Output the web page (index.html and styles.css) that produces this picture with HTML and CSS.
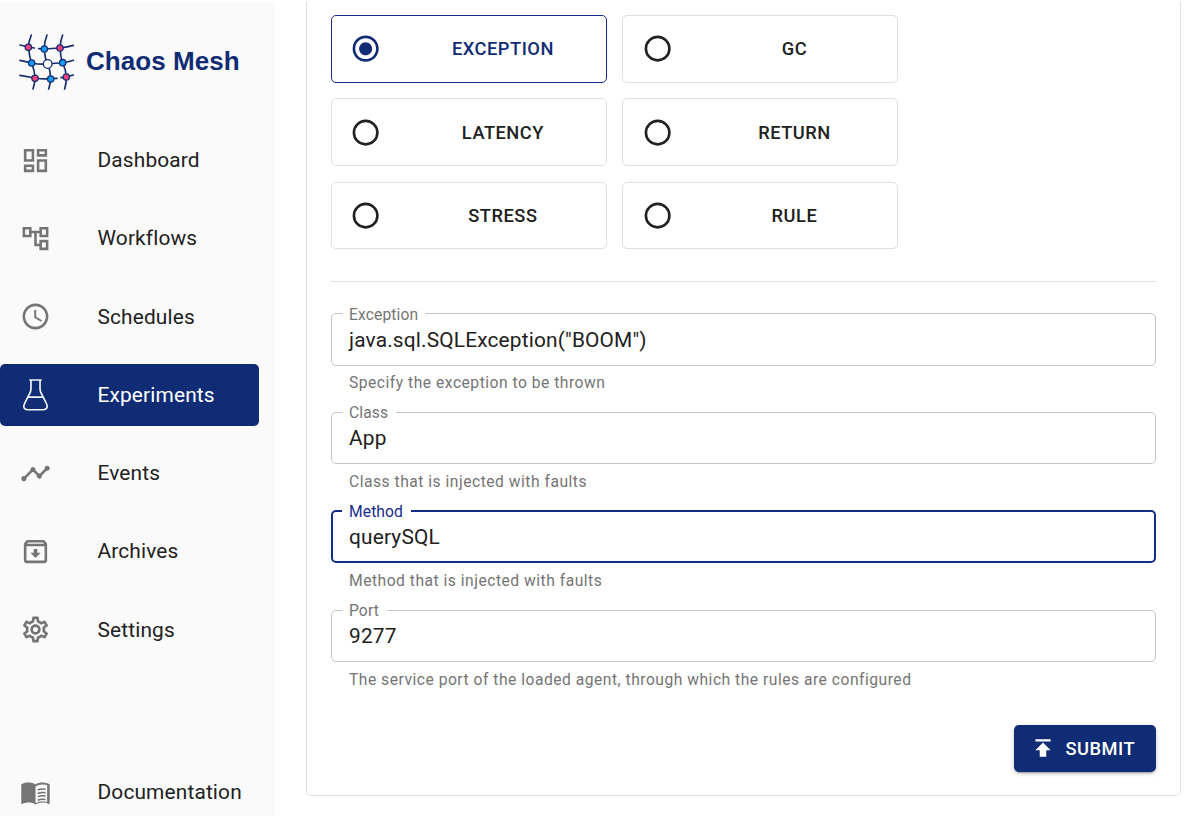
FILE: index.html
```html
<!DOCTYPE html>
<html lang="en">
<head>
<meta charset="utf-8">
<title>Chaos Mesh</title>
<link rel="stylesheet" href="styles.css">
</head>
<body>
<div class="app">
  <aside class="sidebar">
    <div class="brand">
      <svg class="brand-mark" viewBox="0 0 240 225">
        <g fill="none" stroke="#172d72" stroke-width="5" stroke-linecap="round" stroke-linejoin="round">
          <path d="M64 30Q57 46 55 66Q58 94 65 114Q74 136 75 159Q74 177 69 192"/>
          <path d="M111 30Q103 49 103 72Q104 98 113 117Q122 138 122 161Q121 178 116 192"/>
          <path d="M158 30Q151 47 150 69Q151 94 158 114Q168 134 169 156Q169 177 164 192"/>
          <path d="M30 60L55 66L73 69M86 71L103 72L150 69Q173 66 190 61"/>
          <path d="M30 106Q46 110 65 114Q90 119 113 117Q136 114 158 114Q176 111 190 106"/>
          <path d="M30 151Q53 155 75 159Q99 163 122 161L141 160M153 158L169 156L190 150"/>
        </g>
        <g stroke="#172d72" stroke-width="4">
          <g fill="#f8417c"><circle cx="55" cy="67" r="9.500"/><circle cx="150" cy="69" r="9.500"/><circle cx="75" cy="160" r="9.500"/><circle cx="169" cy="156" r="9.500"/></g>
          <g fill="#10a0fa"><circle cx="103" cy="72" r="9.500"/><circle cx="65" cy="114" r="9.500"/><circle cx="158" cy="113" r="9.500"/><circle cx="122" cy="162" r="9.500"/></g>
          <circle cx="113" cy="117" r="13" fill="#fff"/>
        </g>
      </svg>
      <span class="brand-name">Chaos Mesh</span>
    </div>
    <nav class="nav">
      <a class="nav-item"><svg class="icon" viewBox="0 0 24 24"><path d="M19 5v2h-4V5h4M9 5v6H5V5h4m10 8v6h-4v-6h4M9 17v2H5v-2h4M21 3h-8v6h8V3zM11 3H3v10h8V3zm10 8h-8v10h8V11zm-10 4H3v6h8v-6z"/></svg><span>Dashboard</span></a>
      <a class="nav-item"><svg class="icon" viewBox="0 0 24 24"><path d="M22 11V3h-7v3H9V3H2v8h7V8h2v10h4v3h7v-8h-7v3h-2V8h2v3h7zM7 9H4V5h3v4zm10 6h3v4h-3v-4zm0-10h3v4h-3V5z"/></svg><span>Workflows</span></a>
      <a class="nav-item"><svg class="icon" viewBox="0 0 24 24"><path d="M11.99 2C6.47 2 2 6.48 2 12s4.47 10 9.99 10C17.52 22 22 17.52 22 12S17.52 2 11.99 2zM12 20c-4.42 0-8-3.58-8-8s3.58-8 8-8 8 3.58 8 8-3.58 8-8 8zm.5-13H11v6l5.25 3.15.75-1.23-4.5-2.67z"/></svg><span>Schedules</span></a>
      <a class="nav-item nav-item-active"><svg class="icon" viewBox="0 0 24 24"><path class="flask" d="M7.200.8h9.600M8.500.8v6.700c0 1.700-.4 2.800-1.200 4.100L3.700 18.700c-1.700 3.100-.5 5.100 2.300 5.100h12c2.800 0 4-2 2.300-5.100l-3.600-7.100c-.8-1.300-1.200-2.400-1.200-4.100V.8M6.400 14h11.200"/></svg><span>Experiments</span></a>
      <a class="nav-item"><svg class="icon" viewBox="0 0 24 24"><path d="M23 8c0 1.100-.9 2-2 2-.18 0-.35-.02-.51-.07l-3.560 3.550c.05.16.07.34.07.52 0 1.100-.9 2-2 2s-2-.9-2-2c0-.18.02-.36.07-.52l-2.550-2.550c-.16.05-.34.07-.52.07s-.36-.02-.52-.07l-4.550 4.560c.05.16.07.33.07.51 0 1.100-.9 2-2 2s-2-.9-2-2 .9-2 2-2c.18 0 .35.02.51.07l4.560-4.550C8.020 9.360 8 9.180 8 9c0-1.100.9-2 2-2s2 .9 2 2c0 .18-.02.36-.07.52l2.550 2.550c.16-.05.34-.07.52-.07s.36.02.52.07l3.550-3.560C19.020 8.350 19 8.180 19 8c0-1.100.9-2 2-2s2 .9 2 2z"/></svg><span>Events</span></a>
      <a class="nav-item"><svg class="icon" viewBox="0 0 24 24"><path d="M20.540 5.230l-1.390-1.680C18.880 3.210 18.470 3 18 3H6c-.47 0-.88.21-1.160.55L3.460 5.230C3.170 5.570 3 6.020 3 6.500V19c0 1.100.9 2 2 2h14c1.100 0 2-.9 2-2V6.500c0-.48-.17-.93-.46-1.270zM6.240 5h11.520l.83 1H5.420l.82-1zM5 19V8h14v11H5zm8.450-9h-2.900v3H8l4 4 4-4h-2.550z"/></svg><span>Archives</span></a>
      <a class="nav-item"><svg class="icon" viewBox="0 0 24 24"><path d="M19.430 12.980c.04-.32.07-.64.07-.98 0-.34-.03-.66-.07-.98l2.110-1.650c.19-.15.24-.42.12-.64l-2-3.460c-.09-.16-.26-.25-.44-.25-.06 0-.12.01-.17.03l-2.490 1c-.52-.4-1.080-.73-1.690-.98l-.38-2.650C14.460 2.180 14.250 2 14 2h-4c-.25 0-.46.18-.49.42l-.38 2.650c-.61.25-1.170.59-1.690.98l-2.490-1c-.06-.02-.12-.03-.18-.03-.17 0-.34.09-.43.25l-2 3.460c-.13.22-.07.49.12.64l2.110 1.650c-.04.32-.07.65-.07.98 0 .33.03.66.07.98l-2.110 1.650c-.19.15-.24.42-.12.64l2 3.460c.09.16.26.25.44.25.06 0 .12-.01.17-.03l2.490-1c.52.4 1.080.73 1.690.98l.38 2.650c.03.24.24.42.49.42h4c.25 0 .46-.18.49-.42l.38-2.650c.61-.25 1.170-.59 1.690-.98l2.490 1c.06.02.12.03.18.03.17 0 .34-.09.43-.25l2-3.460c.12-.22.07-.49-.12-.64l-2.110-1.650zm-1.980-1.710c.04.31.05.52.05.73 0 .21-.02.43-.05.73l-.14 1.130.89.7 1.080.84-.7 1.210-1.270-.51-1.040-.42-.9.68c-.43.32-.84.56-1.250.73l-1.060.43-.16 1.130-.2 1.350h-1.400l-.19-1.350-.16-1.130-1.060-.43c-.43-.18-.83-.41-1.230-.71l-.91-.7-1.060.43-1.270.51-.7-1.210 1.080-.84.89-.7-.14-1.130c-.03-.31-.05-.54-.05-.74s.02-.43.05-.73l.14-1.130-.89-.7-1.080-.84.7-1.210 1.270.51 1.040.42.9-.68c.43-.32.84-.56 1.250-.73l1.060-.43.16-1.130.2-1.350h1.390l.19 1.350.16 1.130 1.060.43c.43.18.83.41 1.230.71l.91.7 1.060-.43 1.270-.51.7 1.210-1.070.85-.89.7.14 1.130zM12 8c-2.210 0-4 1.790-4 4s1.790 4 4 4 4-1.790 4-4-1.790-4-4-4zm0 6c-1.100 0-2-.9-2-2s.9-2 2-2 2 .9 2 2-.9 2-2 2z"/></svg><span>Settings</span></a>
    </nav>
    <a class="nav-item nav-docs"><svg class="icon" viewBox="0 0 24 24"><path d="M1 5v14.650c0 .25.25.5.5.5.1 0 .15-.05.25-.05C3.100 19.450 5.050 19 6.500 19c1.950 0 4.050.4 5.500 1.500 1.350-.85 3.800-1.500 5.500-1.500 1.650 0 3.350.3 4.750 1.050.1.05.15.05.25.05.25 0 .5-.25.5-.5V5c-.6-.45-1.250-.75-2-1-1.110-.35-2.330-.5-3.500-.5-1.950 0-4.050.4-5.500 1.500C10.550 3.900 8.450 3.500 6.500 3.500S2.450 3.900 1 5z"/><path fill="#fafafa" d="M21 18.500c-1.100-.35-2.300-.5-3.500-.5-1.700 0-4.150.65-5.500 1.500V8 6.500c1.350-.85 3.800-1.500 5.500-1.500 1.200 0 2.400.15 3.500.5z"/><path class="page-lines" d="M13.700 9.300c1.300-.6 3.800-1 6.100-.6M13.700 11.960c1.300-.6 3.800-1 6.100-.6M13.700 14.620c1.300-.6 3.800-1 6.100-.6M13.700 17.200c1.300-.6 3.800-1 6.100-.6"/></svg><span>Documentation</span></a>
  </aside>

  <main class="panel">
    <div class="actions">
      <div class="action action-selected"><svg class="radio" viewBox="0 0 24 24"><path d="M12 7c-2.760 0-5 2.240-5 5s2.240 5 5 5 5-2.240 5-5-2.240-5-5-5zm0-5C6.480 2 2 6.480 2 12s4.480 10 10 10 10-4.480 10-10S17.520 2 12 2zm0 18c-4.420 0-8-3.580-8-8s3.580-8 8-8 8 3.580 8 8-3.580 8-8 8z"/></svg><span>EXCEPTION</span></div>
      <div class="action"><svg class="radio" viewBox="0 0 24 24"><circle class="ring" cx="12" cy="12" r="9"/></svg><span>GC</span></div>
      <div class="action"><svg class="radio" viewBox="0 0 24 24"><circle class="ring" cx="12" cy="12" r="9"/></svg><span>LATENCY</span></div>
      <div class="action"><svg class="radio" viewBox="0 0 24 24"><circle class="ring" cx="12" cy="12" r="9"/></svg><span>RETURN</span></div>
      <div class="action"><svg class="radio" viewBox="0 0 24 24"><circle class="ring" cx="12" cy="12" r="9"/></svg><span>STRESS</span></div>
      <div class="action"><svg class="radio" viewBox="0 0 24 24"><circle class="ring" cx="12" cy="12" r="9"/></svg><span>RULE</span></div>
    </div>
    <hr class="divider">
    <form class="fields">
      <div class="field"><fieldset class="outline"><legend>Exception</legend><div class="value">java.sql.SQLException("BOOM")</div></fieldset><p class="helper">Specify the exception to be thrown</p></div>
      <div class="field"><fieldset class="outline"><legend>Class</legend><div class="value">App</div></fieldset><p class="helper">Class that is injected with faults</p></div>
      <div class="field field-focused"><fieldset class="outline"><legend>Method</legend><div class="value">querySQL</div></fieldset><p class="helper">Method that is injected with faults</p></div>
      <div class="field"><fieldset class="outline"><legend>Port</legend><div class="value">9277</div></fieldset><p class="helper">The service port of the loaded agent, through which the rules are configured</p></div>
    </form>
    <div class="footer">
      <button class="submit" type="button"><svg class="submit-icon" viewBox="0 0 24 24"><path d="M5 4v2h14V4H5zm0 10h4v6h6v-6h4l-7-7-7 7z"/></svg><span>SUBMIT</span></button>
    </div>
  </main>
</div>
</body>
</html>
```
FILE: styles.css
```css
* { box-sizing: border-box; }
body {
  margin: 0;
  height: 820px;
  overflow: hidden;
  background: #fff;
  color: #212121;
  font-family: Roboto, "Liberation Sans", sans-serif;
}
.app { display: flex; align-items: flex-start; padding-top: 2px; }

.sidebar {
  flex: none;
  width: 274.5px;
  height: 814px;
  overflow: hidden;
  background: #fafafa;
}
.brand { display: flex; align-items: center; height: 121px; padding: 0 0 1px 10px; }
.brand-mark { width: 80px; height: 75px; }
.brand-name {
  margin-left: -4px;
  padding-bottom: 3px;
  color: #102c74;
  font: bold 26px/30px "Liberation Sans", sans-serif;
  letter-spacing: 0.05px;
}
.nav { display: flex; flex-direction: column; gap: 15.65px; padding-top: 5.8px; }
.nav-item {
  display: flex;
  align-items: center;
  width: 259px;
  height: 62.6px;
  padding-left: 19.5px;
  border-radius: 5px;
  font-size: 20.86px;
  letter-spacing: 0.15px;
}
.nav-item span { margin-left: 47px; }
.icon { flex: none; width: 31px; height: 31px; fill: #757575; overflow: visible; }
.nav-item-active { background: #102c74; color: #fff; }
.flask { fill: none; stroke: #f0f2f8; stroke-width: 1.3; }
.page-lines { fill: none; stroke: #757575; stroke-width: 1.2; }
.nav-docs { margin-top: 100.2px; }
.nav-docs .icon { margin-top: 2px; }

.panel {
  flex: none;
  width: 874.5px;
  height: 794px;
  margin-left: 31.5px;
  padding: 13px 24px 0;
  border: 1px solid #e0e0e0;
  border-top: 0;
  border-radius: 0 0 5px 5px;
}
.actions {
  display: grid;
  grid-template-columns: 275.5px 275.5px;
  grid-auto-rows: 67.6px;
  gap: 15.8px;
}
.action {
  display: flex;
  align-items: center;
  padding: 0 18px;
  border: 1px solid #e0e0e0;
  border-radius: 5px;
  font-size: 18.25px;
  font-weight: 500;
  letter-spacing: 0.52px;
}
.action:nth-child(even) { padding-left: 18.5px; }
.action span { flex: 1; padding-left: 37px; text-align: center; }
.action-selected { border-color: #172d8a; color: #102c74; }
.radio { flex: none; width: 31.3px; height: 31.3px; fill: currentColor; }
.ring { fill: none; stroke: currentColor; stroke-width: 2; }
.divider { height: 1px; margin: 31.3px 0 23.9px; border: 0; background: #e0e0e0; }

.fields { display: flex; flex-direction: column; }
.field { height: 98.9px; }
.outline {
  height: 60px;
  margin: 0;
  padding: 0 10px;
  border: 1px solid #c4c4c4;
  border-radius: 5px;
}
.outline legend {
  height: 16px;
  padding: 0 8px 0 7px;
  color: #757575;
  font-size: 15.65px;
  line-height: 17px;
  letter-spacing: 0.1px;
}
.value { padding-left: 7px; font-size: 20.86px; line-height: 36px; letter-spacing: 0.17px; }
.helper {
  margin: 4.5px 0 0 18px;
  color: #757575;
  font-size: 15.65px;
  line-height: 26px;
  letter-spacing: 0.5px;
}
.field-focused .outline { padding: 0 9px; border: 2px solid #102c84; }
.field-focused legend { color: #172d8a; line-height: 17px; }
.field-focused .value { line-height: 36px; }

.footer { display: flex; justify-content: flex-end; margin-top: 23.8px; }
.submit {
  display: flex;
  align-items: center;
  gap: 10px;
  width: 142px;
  height: 47px;
  padding: 0 0 0 16px;
  border: 0;
  border-radius: 5px;
  background: #102c74;
  color: #fff;
  box-shadow: 0 4px 1px -3px rgba(0,0,0,.2), 0 2px 3px rgba(0,0,0,.14), 0 1px 6px rgba(0,0,0,.12);
  font: 500 18.25px Roboto, sans-serif;
  letter-spacing: 0.52px;
}
.submit-icon { width: 26px; height: 26px; fill: currentColor; }
```
